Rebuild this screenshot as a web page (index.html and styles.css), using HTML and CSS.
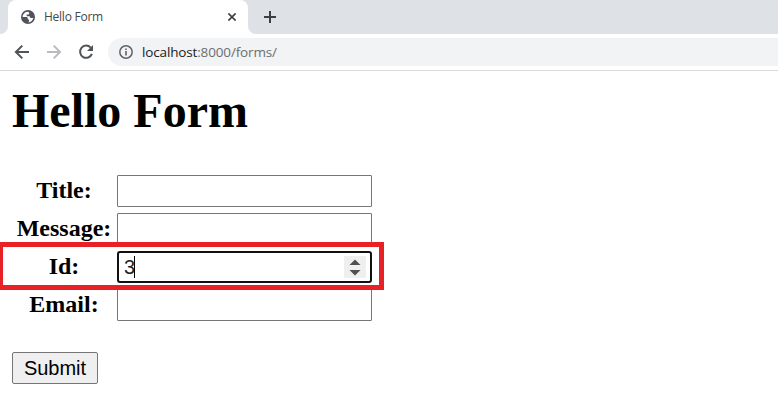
FILE: index.html
```html
<!DOCTYPE html>
<html lang="en">
<head>
<meta charset="utf-8">
<title>Hello Form</title>
<link rel="stylesheet" href="styles.css">
</head>
<body>
<header class="browser">
  <div class="tabstrip">
    <div class="corner corner-left"></div>
    <div class="tab">
      <svg class="globe" width="14" height="14" viewBox="0 0 14 14"><circle cx="7" cy="7" r="7" fill="#50545a"/><path d="M7.2 1.7C4.700 1.600 2.500 3.200 1.800 5.500L1.600 7h3.500c1.200 0 1.700.7 1.700 1.700v.7h1.300v1.300c0 .8-.4 1.300-1.200 1.700 2.700 0 4.900-1.700 5.400-4.400H10c-.8 0-1.200-.5-1.200-1.200V6.200H5.700V4.500h1.600c.6 0 .9-.4.900-.9V2.800z" fill="#fff"/></svg>
      <span class="tab-title">Hello Form</span>
      <svg class="close" width="8" height="8" viewBox="0 0 8 8"><path d="M.4.4l7.200 7.200M7.600.4L.4 7.600" stroke="#3c4043" stroke-width="1.600"/></svg>
    </div>
    <div class="corner corner-right"></div>
    <svg class="plus" width="12" height="12" viewBox="0 0 12 12"><path d="M6 0v12M0 6h12" stroke="#3c4043" stroke-width="2"/></svg>
  </div>
  <div class="toolbar">
    <svg class="nav" width="16" height="16" viewBox="0 0 16 16" fill="none" stroke="#505357" stroke-width="2"><path d="M15 8H2.500M8.300 1.600L1.900 8l6.400 6.400"/></svg>
    <svg class="nav" width="16" height="16" viewBox="0 0 16 16" fill="none" stroke="#b9bbbe" stroke-width="2"><path d="M1 8h12.500M7.700 1.600L14.100 8l-6.400 6.400"/></svg>
    <svg class="nav" width="16" height="16" viewBox="0 0 16 16"><path d="M12.700 3.600A6.100 6.100 0 1 0 13.900 9.900" fill="none" stroke="#505357" stroke-width="2"/><path d="M15 1v6H9z" fill="#505357"/></svg>
    <div class="address">
      <svg width="14" height="14" viewBox="0 0 14 14"><circle cx="7" cy="7" r="6.200" fill="none" stroke="#5f6368" stroke-width="1.500"/><path d="M7 6v4.500M7 3.400v1.500" stroke="#5f6368" stroke-width="1.600"/></svg>
      <span class="url"><span class="host">localhost</span>:8000/forms/</span>
    </div>
  </div>
</header>
<main class="page">
  <h1>Hello Form</h1>
  <form>
    <div class="row"><label for="title">Title:</label><input id="title" class="field" type="text"></div>
    <div class="row"><label for="message">Message:</label><input id="message" class="field" type="text"></div>
    <div class="row">
      <label>Id:</label>
      <div class="field focused"><span class="value">3</span><span class="caret"></span>
        <svg class="spinner" width="22" height="22" viewBox="0 0 22 22"><path fill="#efefef" d="M0 0h22v22H0z"/><path d="M5.500 9L11 3.500 16.500 9zM5.500 14l5.500 5.500 5.500-5.500z" fill="#505050"/></svg>
      </div>
      <div class="highlight"></div>
    </div>
    <div class="row"><label for="email">Email:</label><input id="email" class="field" type="text"></div>
    <button class="submit" type="button">Submit</button>
  </form>
</main>
</body>
</html>
```
FILE: styles.css
```css
* { box-sizing: border-box; }
body { margin: 0; background: #fff; overflow: hidden; }
svg { display: block; flex: none; }
.browser { height: 71px; border-bottom: 1px solid #d9dadc; font-family: "Open Sans", sans-serif; }
.tabstrip { display: flex; height: 34px; background: #dee1e6; }
.tab { display: flex; align-items: center; width: 240px; height: 34px; padding: 0 12px 0 13px; background: #fff; border-radius: 8px 8px 0 0; }
.corner { width: 8px; height: 8px; align-self: flex-end; }
.corner-left { background: radial-gradient(circle at 0 0, #dee1e6 7.5px, #fff 8.5px); }
.corner-right { background: radial-gradient(circle at 100% 0, #dee1e6 7.5px, #fff 8.5px); }
.tab-title { margin-left: 9px; font-size: 12px; line-height: 16px; letter-spacing: -0.25px; color: #45484c; }
.close { margin-left: auto; }
.plus { margin: 11px 0 0 8px; }
.toolbar { display: flex; align-items: center; height: 36px; padding-left: 14px; }
.nav { margin-right: 16px; }
.address { display: flex; align-items: center; flex: 1; height: 28px; margin-left: -2px; padding-left: 11px; background: #f1f3f4; border-radius: 14px 0 0 14px; }
.url { margin-left: 9px; font-size: 13.5px; line-height: 20px; letter-spacing: -0.15px; color: #6b6f73; }
.host { color: #202124; }
.page { padding: 12px 12px 0; font-family: "Liberation Serif", serif; color: #000; }
h1 { margin: 0; font-size: 48px; line-height: 56px; font-weight: 700; }
form { padding-top: 36px; }
.row { position: relative; display: flex; align-items: center; height: 32px; margin-bottom: 6px; }
label { width: 105px; padding: 0 1px 2px 0; text-align: center; font-size: 24px; line-height: 28px; font-weight: 700; }
.field { width: 255px; height: 32px; margin: 0; padding: 0 5px; border: 1px solid #767676; border-radius: 1px; background: #fff; font: 20px "Liberation Sans", sans-serif; }
.focused { display: flex; align-items: center; border: 2px solid #101010; border-radius: 3px; padding: 0 4px 0 5px; }
.value { padding-bottom: 1px; letter-spacing: -1px; line-height: 24px; color: #222; }
.caret { width: 1px; height: 22px; background: #000; }
.spinner { margin-left: auto; }
.highlight { position: absolute; z-index: 1; left: -14px; top: -9px; width: 386px; height: 48px; border: 5px solid #e82127; }
.submit { display: block; width: 86px; height: 32px; margin: 31px 0 0; padding: 0; border: 1px solid #767676; border-radius: 2px; background: #efefef; color: #000; font: 20px "Liberation Sans", sans-serif; }
```
